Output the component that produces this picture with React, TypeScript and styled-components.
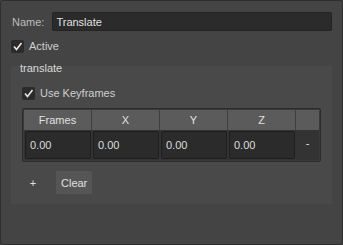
import styled, { createGlobalStyle } from "styled-components";
import React from "react";

const GlobalStyle = createGlobalStyle`
  html, body {
    margin: 0;
    padding: 0;
    background: #444444;
  }
  body {
    font-family: "Liberation Sans", Arial, sans-serif;
    font-size: 11px;
    color: #d2d2d2;
  }
`;

interface CheckProps {
  label: string;
}

const Check = ({ label }: CheckProps) => {
  return (
    <CheckRow>
      <CheckBox>
        <svg width={11} height={11} viewBox="0 0 11 11">
          <path d="M2 5.5 L4.5 8.5 L9.5 2" fill="none" stroke="#e8e8e8" strokeWidth={1.6} />
        </svg>
      </CheckBox>
      <span>{label}</span>
    </CheckRow>
  );
};

const columns = ["Frames", "X", "Y", "Z"];

const App = () => {
  return (
    <Panel>
      <GlobalStyle />
      <NameRow>
        <Label>Name:</Label>
        <TextField>Translate</TextField>
      </NameRow>
      <Check label="Active" />
      <Group>
        <GroupTitle>translate</GroupTitle>
        <GroupBody>
          <Check label="Use Keyframes" />
          <Table>
            <HeaderRow>
              {columns.map((c) => (
                <HeaderCell key={c}>{c}</HeaderCell>
              ))}
              <HeaderCell />
            </HeaderRow>
            <BodyRow>
              {columns.map((c) => (
                <Cell key={c}>
                  <CellInput>0.00</CellInput>
                </Cell>
              ))}
              <RemoveCell>-</RemoveCell>
            </BodyRow>
          </Table>
          <ButtonRow>
            <PlainButton>+</PlainButton>
            <Button>Clear</Button>
          </ButtonRow>
        </GroupBody>
      </Group>
    </Panel>
  );
};

const Panel = styled.div`
  width: 343px;
  height: 245px;
  box-sizing: border-box;
  border: 1px solid #2e2e2e;
  border-radius: 3px;
  background: #444444;
  padding: 11px 10px 0 10px;
  display: flex;
  flex-direction: column;
`;

const NameRow = styled.div`
  display: flex;
  align-items: center;
  gap: 8px;
  height: 19px;
`;

const Label = styled.div`
  color: #bdbdbd;
  padding-left: 1px;
`;

const TextField = styled.div`
  flex: 1;
  height: 19px;
  box-sizing: border-box;
  background: #2b2b2b;
  border: 1px solid #232323;
  border-radius: 2px;
  padding: 0 3px;
  display: flex;
  align-items: center;
  color: #e0e0e0;
`;

const CheckRow = styled.div`
  display: flex;
  align-items: center;
  gap: 5px;
  height: 14px;
  margin-top: 8px;
  color: #cfcfcf;
`;

const CheckBox = styled.div`
  width: 13px;
  height: 13px;
  box-sizing: border-box;
  background: #2b2b2b;
  border-radius: 2px;
  display: flex;
  align-items: center;
  justify-content: center;
`;

const Group = styled.div`
  position: relative;
  margin-top: 13px;
  background: #494949;
  display: flex;
  flex-direction: column;
`;

const GroupTitle = styled.div`
  position: absolute;
  left: 9px;
  top: -4px;
  color: #d8d8d8;
`;

const GroupBody = styled.div`
  padding: 12px 11px 10px 11px;
  display: flex;
  flex-direction: column;
`;

const Table = styled.div`
  margin-top: 8px;
  border: 1px solid #2c2c2c;
  border-radius: 2px;
  padding: 1px;
  background: #3a3a3a;
  display: flex;
  flex-direction: column;
`;

const HeaderRow = styled.div`
  display: grid;
  grid-template-columns: 68px 68px 68px 68px 1fr;
  height: 20px;
`;

const HeaderCell = styled.div`
  background: #5b5b5b;
  border-right: 1px solid #3e3e3e;
  display: flex;
  align-items: center;
  justify-content: center;
  color: #e0e0e0;

  &:last-child {
    border-right: none;
  }
`;

const BodyRow = styled.div`
  display: grid;
  grid-template-columns: 68px 68px 68px 68px 1fr;
  height: 30px;
  background: #333333;
`;

const Cell = styled.div`
  padding: 1px;
  display: flex;
`;

const CellInput = styled.div`
  flex: 1;
  box-sizing: border-box;
  background: #2b2b2b;
  border: 1px solid #1e1e1e;
  border-radius: 2px;
  padding-left: 4px;
  display: flex;
  align-items: center;
  color: #dcdcdc;
`;

const RemoveCell = styled.div`
  display: flex;
  align-items: center;
  justify-content: center;
  padding-bottom: 5px;
  color: #e0e0e0;
`;

const ButtonRow = styled.div`
  display: flex;
  align-items: center;
  margin-top: 9px;
  gap: 12px;
`;

const PlainButton = styled.div`
  width: 22px;
  height: 23px;
  display: flex;
  align-items: center;
  justify-content: center;
  color: #e0e0e0;
`;

const Button = styled.div`
  height: 23px;
  padding: 0 5px;
  background: #555555;
  border-radius: 1px;
  display: flex;
  align-items: center;
  color: #e0e0e0;
`;

export default App;
